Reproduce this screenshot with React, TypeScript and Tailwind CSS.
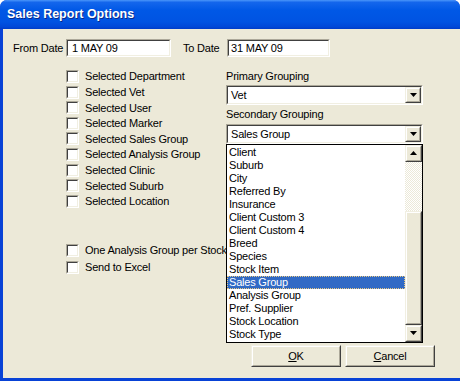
import type { ReactNode } from "react";

const font = "font-['Liberation_Sans',Arial,sans-serif] text-[11px] tracking-[-0.2px] text-black";

function Sunken({ className = "", children }: { className?: string; children?: ReactNode }) {
  return (
    <div className={`border border-t-[#ACA899] border-l-[#ACA899] border-b-white border-r-white ${className}`}>
      <div className="h-full w-full border border-t-[#404040] border-l-[#404040] border-b-[#F1EFE2] border-r-[#F1EFE2] bg-white">
        {children}
      </div>
    </div>
  );
}

function Raised({ className = "", children }: { className?: string; children?: ReactNode }) {
  return (
    <div className={`border border-t-[#F1EFE2] border-l-[#F1EFE2] border-b-[#404040] border-r-[#404040] ${className}`}>
      <div className="flex h-full w-full items-center justify-center border border-t-white border-l-white border-b-[#ACA899] border-r-[#ACA899] bg-[#ECE9D8]">
        {children}
      </div>
    </div>
  );
}

function Arrow({ up = false }: { up?: boolean }) {
  return (
    <svg width="7" height="4" viewBox="0 0 7 4">
      <path d={up ? "M3.5 0 L7 4 L0 4 Z" : "M0 0 L7 0 L3.5 4 Z"} fill="#000" />
    </svg>
  );
}

function CheckRow({ label, h = "h-[15.6px]" }: { label: string; h?: string }) {
  return (
    <div className={`flex items-center gap-[6px] whitespace-nowrap ${h}`}>
      <Sunken className="h-[13px] w-[13px] shrink-0" />
      <span>{label}</span>
    </div>
  );
}

function Combo({ value }: { value: string }) {
  return (
    <Sunken className="h-[20px] w-[197px]">
      <div className="flex h-full items-center">
        <span className="flex-1 pl-[3px]">{value}</span>
        <Raised className="h-[16px] w-[16px]">
          <Arrow />
        </Raised>
      </div>
    </Sunken>
  );
}

const checks = [
  "Selected Department",
  "Selected Vet",
  "Selected User",
  "Selected Marker",
  "Selected Sales Group",
  "Selected Analysis Group",
  "Selected Clinic",
  "Selected Suburb",
  "Selected Location",
];

const items = [
  "Client",
  "Suburb",
  "City",
  "Referred By",
  "Insurance",
  "Client Custom 3",
  "Client Custom 4",
  "Breed",
  "Species",
  "Stock Item",
  "Sales Group",
  "Analysis Group",
  "Pref. Supplier",
  "Stock Location",
  "Stock Type",
];

export default function App() {
  return (
    <div className={`flex h-[381px] w-[460px] flex-col overflow-hidden rounded-t-[7px] bg-[#0842D6] ${font}`}>
      {/* title bar */}
      <div className="flex h-[29px] shrink-0 items-center bg-[linear-gradient(180deg,#4A96FA_0%,#1466EC_8%,#0058E6_35%,#0053E2_75%,#0048D8_92%,#003CC8_100%)] pl-[7px]">
        <span className="font-['Liberation_Sans',Arial,sans-serif] text-[12.5px] font-bold tracking-normal text-white [text-shadow:1px_1px_#0A2A8A]">
          Sales Report Options
        </span>
      </div>

      {/* body */}
      <div className="mb-[3px] ml-[3px] flex flex-1 flex-col bg-[#ECE9D8] pl-[10px] pt-[10px]">
        <div className="flex h-[18px] items-center">
          <span className="w-[53px]">From Date</span>
          <Sunken className="h-[18px] w-[105px]">
            <div className="flex h-full items-center pl-[4px]">1 MAY 09</div>
          </Sunken>
          <span className="ml-[12px] w-[44px]">To Date</span>
          <Sunken className="h-[18px] w-[103px]">
            <div className="flex h-full items-center pl-[2px]">31 MAY 09</div>
          </Sunken>
        </div>

        <div className="ml-[53px] mt-[11.8px] flex">
          <div className="flex w-[160px] flex-col">
            {checks.map((c) => (
              <CheckRow key={c} label={c} />
            ))}
            <div className="mt-[32.8px]">
              <CheckRow label="One Analysis Group per Stock" h="h-[17px]" />
              <CheckRow label="Send to Excel" h="h-[17px]" />
            </div>
          </div>

          <div className="flex w-[197px] flex-col">
            <div className="flex h-[15.6px] items-center">Primary Grouping</div>
            <div className="mt-[0.6px]">
              <Combo value="Vet" />
            </div>
            <div className="flex h-[19px] items-end pb-[1px]">Secondary Grouping</div>
            <div className="relative">
              <Combo value="Sales Group" />
              {/* open dropdown list */}
              <div className="absolute left-0 top-[20px] z-10 flex h-[199px] w-[197px] border border-black bg-white">
                <div className="flex flex-1 flex-col pt-[1px]">
                  {items.map((it) =>
                    it === "Sales Group" ? (
                      <div
                        key={it}
                        className="flex h-[13px] items-center border border-dotted border-[#E8C882] bg-[#316AC5] pl-[1px] text-white"
                      >
                        {it}
                      </div>
                    ) : (
                      <div key={it} className="flex h-[13px] items-center pl-[2px]">
                        {it}
                      </div>
                    )
                  )}
                </div>
                <div className="flex w-[17px] flex-col">
                  <Raised className="h-[17px] w-[17px]">
                    <Arrow up />
                  </Raised>
                  <div className="h-[49px] bg-[repeating-conic-gradient(#ECE9D8_0_25%,#ffffff_0_50%)] bg-[length:2px_2px]" />
                  <Raised className="h-[114px] w-[17px]" />
                  <Raised className="h-[17px] w-[17px]">
                    <Arrow />
                  </Raised>
                </div>
              </div>
            </div>
          </div>
        </div>

        <div className="mt-auto flex justify-end gap-[4px] pb-[11px] pr-[25px]">
          <Raised className="h-[22px] w-[90px]">
            <span>
              <span className="underline">O</span>K
            </span>
          </Raised>
          <Raised className="h-[22px] w-[90px]">
            <span>
              <span className="underline">C</span>ancel
            </span>
          </Raised>
        </div>
      </div>
    </div>
  );
}
